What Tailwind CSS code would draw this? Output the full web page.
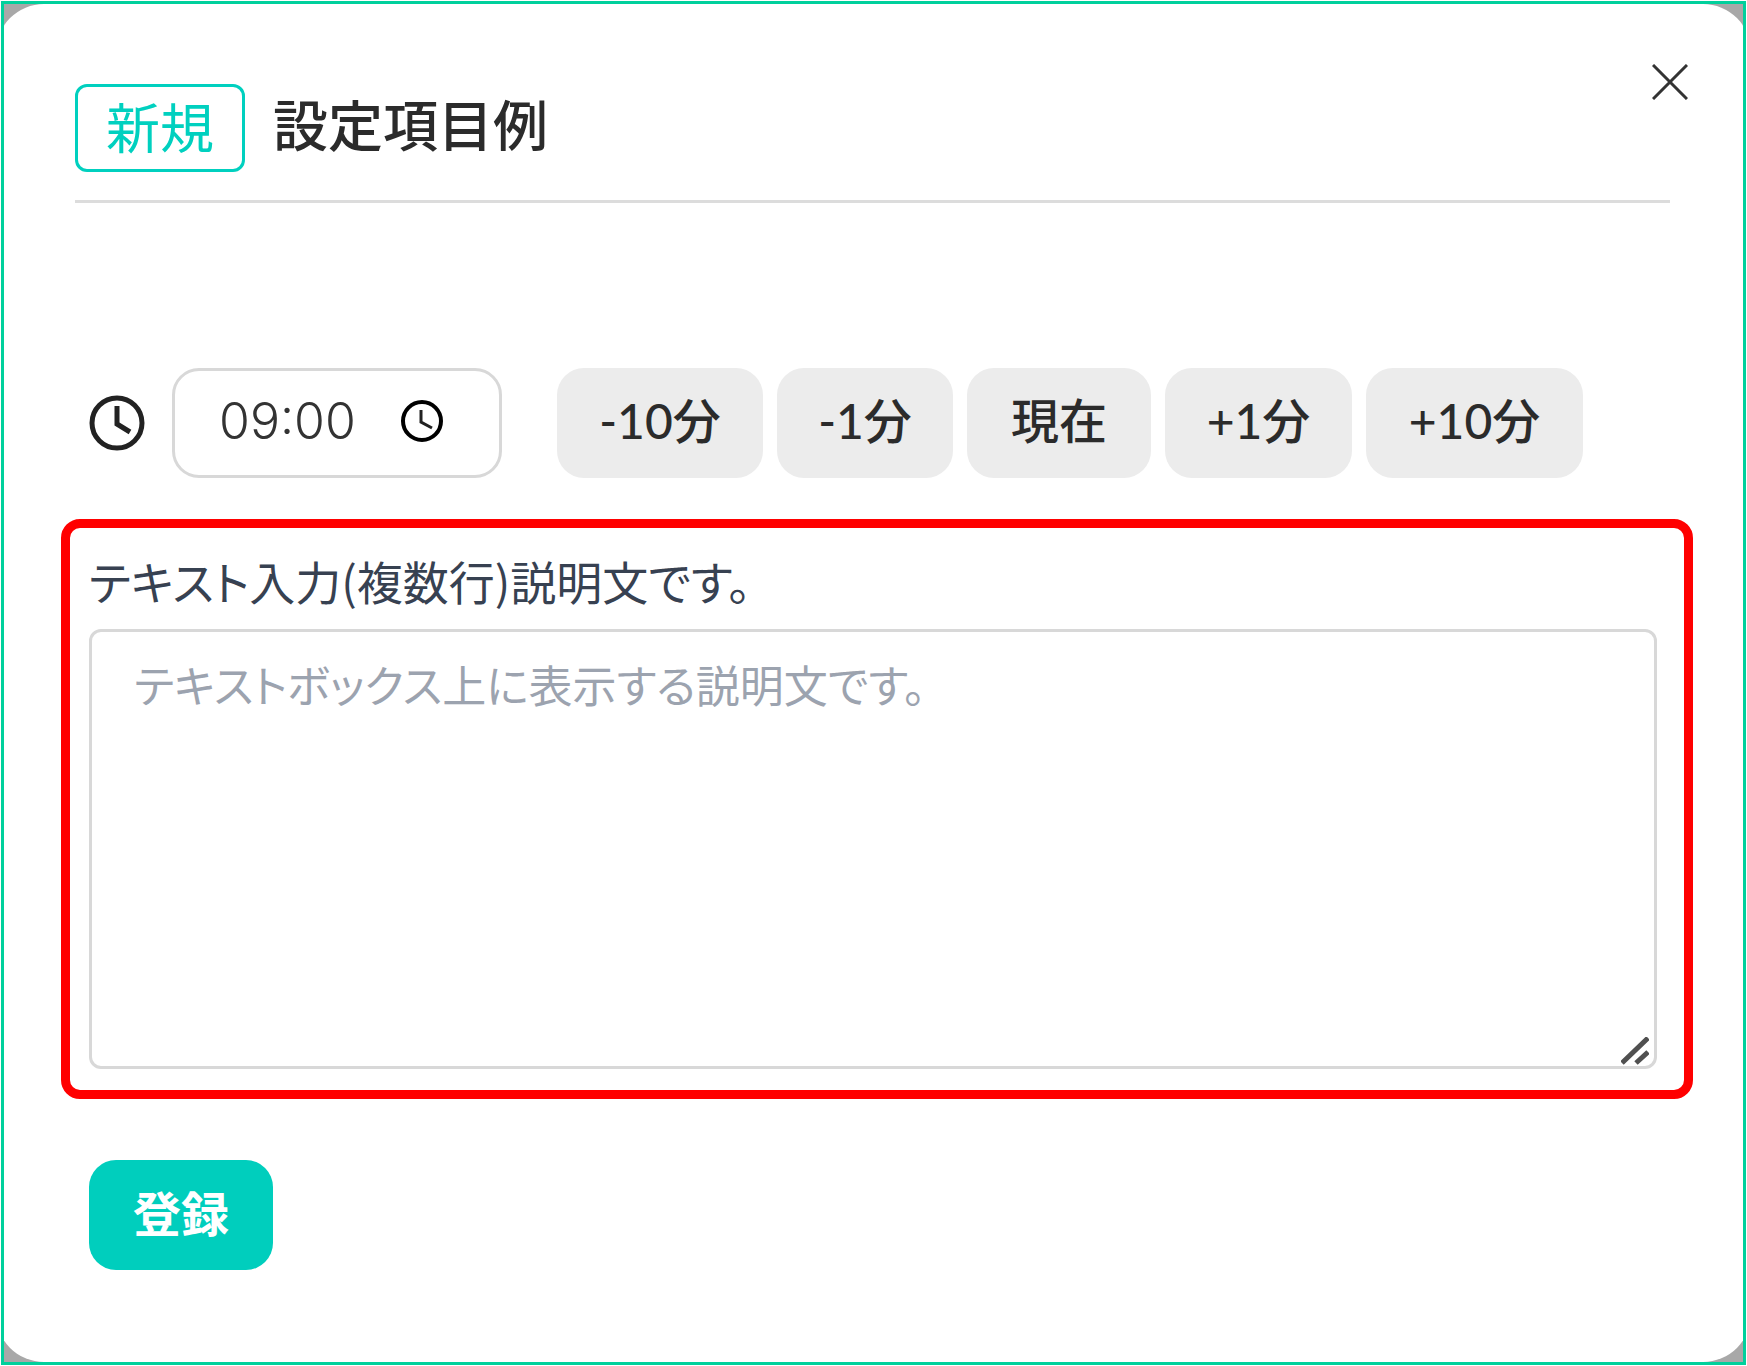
<!DOCTYPE html>
<html lang="ja">
<head>
<meta charset="utf-8">
<meta name="viewport" content="width=device-width, initial-scale=1">
<title>設定項目例</title>
<script src="https://cdn.jsdelivr.net/npm/@tailwindcss/browser@4"></script>
</head>
<body class="min-h-screen bg-white p-px font-['Noto_Sans_CJK_JP',sans-serif] text-[#2b2b2b]">
<div class="overflow-hidden border-3 border-[#00d09c] bg-[#a8a8a8]">
  <main class="-mx-2 rounded-[48px] bg-white pt-20 pr-[81px] pb-[92px] pl-[79px]">
    <header class="relative flex items-start gap-7 border-b-3 border-[#dcdcdc] pb-7">
      <span class="flex h-[88px] items-center rounded-xl border-3 border-[#00d0bf] px-7 pb-1 text-[54px] leading-none text-[#00d0bf]">新規</span>
      <h1 class="text-[55px] leading-[76px] font-medium">設定項目例</h1>
      <button type="button" aria-label="閉じる" class="absolute -top-[26px] -right-6 flex size-12 items-center justify-center">
        <svg class="size-9" viewBox="0 0 36 36" fill="none" stroke="#333" stroke-width="3" aria-hidden="true"><path d="M1 1 35 35M35 1 1 35"/></svg>
      </button>
    </header>

    <form class="mt-[165px]">
      <div class="flex items-center pl-3.5">
        <label for="time" aria-label="時刻" class="mr-[27px]">
          <svg class="size-14" viewBox="0 0 56 56" fill="none" stroke="#222" stroke-width="5" aria-hidden="true"><circle cx="28" cy="28" r="25"/><path d="M28 11v18l13 8"/></svg>
        </label>
        <div class="flex h-[110px] w-[330px] items-center rounded-[27px] border-3 border-[#d8d8d8] pb-1 pl-11">
          <input id="time" type="text" value="09:00" class="w-[181px] bg-transparent font-['Inter'] text-[50px] leading-none font-light text-[#333] outline-none">
          <button type="button" aria-label="時刻を選択">
            <svg class="size-11" viewBox="0 0 44 44" fill="none" stroke="#000" aria-hidden="true"><circle cx="22" cy="22" r="19" stroke-width="4"/><path d="M21 11v12l11 6" stroke="#222" stroke-width="3"/></svg>
          </button>
        </div>
        <div class="ml-[55px] flex gap-3.5 font-['Lato','Noto_Sans_CJK_JP',sans-serif] text-[48px] leading-none font-medium">
          <button type="button" class="h-[110px] w-[206px] rounded-[27px] bg-[#ececec] pb-1">-10分</button>
          <button type="button" class="h-[110px] w-[176px] rounded-[27px] bg-[#ececec] pb-1">-1分</button>
          <button type="button" class="h-[110px] w-[184px] rounded-[27px] bg-[#ececec] pb-1">現在</button>
          <button type="button" class="h-[110px] w-[187px] rounded-[27px] bg-[#ececec] pb-1">+1分</button>
          <button type="button" class="h-[110px] w-[217px] rounded-[27px] bg-[#ececec] pb-1">+10分</button>
        </div>
      </div>

      <div class="-mr-[23px] -ml-3.5 mt-[41px] rounded-[19px] border-9 border-[#ff0000] px-[19px] pt-4 pb-[21px] [font-feature-settings:'palt']">
        <label for="memo" class="block text-[46px] leading-[72px] text-[#374151]">テキスト入力(複数行)説明文です。</label>
        <div class="relative mt-[13px] mr-2">
          <textarea id="memo" placeholder="テキストボックス上に表示する説明文です。" class="block h-[440px] w-full resize-none rounded-xl border-3 border-[#d8d8d8] px-[42px] py-4 text-[44px] leading-[72px] placeholder:text-[#9ca3af]"></textarea>
          <svg class="absolute right-2 bottom-1 h-7 w-7" viewBox="0 0 28 28" fill="none" stroke="#505050" stroke-width="5" aria-hidden="true"><path d="M1 26 27 1M15 26 27 15"/></svg>
        </div>
      </div>

      <button type="submit" class="mt-[61px] ml-3.5 h-[110px] w-[184px] rounded-[27px] bg-[#00cebd] pb-2 text-[48px] leading-none font-bold text-white">登録</button>
    </form>
  </main>
</div>
</body>
</html>
